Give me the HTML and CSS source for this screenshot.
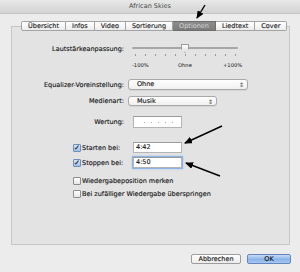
FILE: index.html
```html
<!DOCTYPE html>
<html lang="de">
<head>
    <meta charset="UTF-8">
    <title>African Skies</title>
    <link rel="stylesheet" href="styles.css">
</head>
<body>
    <div class="titlebar">African Skies</div>

    <div class="window">
        <div class="tabs">
            <span class="tab">Übersicht</span>
            <span class="tab">Infos</span>
            <span class="tab">Video</span>
            <span class="tab">Sortierung</span>
            <span class="tab active">Optionen</span>
            <span class="tab">Liedtext</span>
            <span class="tab">Cover</span>
        </div>

        <div class="panel">
            <div class="row row-slider">
                <div class="label">Lautstärkeanpassung:</div>
                <div class="slider">
                    <div class="track"><div class="thumb"></div></div>
                    <div class="ticks">
                        <span></span><span></span><span></span><span></span><span></span><span></span>
                        <span></span><span></span><span></span><span></span><span></span>
                    </div>
                    <div class="scale">
                        <span>-100%</span>
                        <span>Ohne</span>
                        <span>+100%</span>
                    </div>
                </div>
            </div>

            <div class="row row-eq">
                <div class="label">Equalizer-Voreinstellung:</div>
                <div class="popup popup-wide">Ohne<span class="updown">⇕</span></div>
            </div>

            <div class="row row-media">
                <div class="label">Medienart:</div>
                <div class="popup popup-short">Musik<span class="updown">⇕</span></div>
            </div>

            <div class="row row-rating">
                <div class="label">Wertung:</div>
                <div class="field rating">
                    <span class="dot"></span><span class="dot"></span><span class="dot"></span><span class="dot"></span><span class="dot"></span>
                </div>
            </div>

            <div class="row row-start">
                <div class="check-label"><span class="checkbox checked">✓</span>Starten bei:</div>
                <div class="field">4:42</div>
            </div>

            <div class="row row-stop">
                <div class="check-label"><span class="checkbox checked">✓</span>Stoppen bei:</div>
                <div class="field focused">4:50</div>
            </div>

            <div class="option option-first"><span class="checkbox"></span>Wiedergabeposition merken</div>
            <div class="option"><span class="checkbox"></span>Bei zufälliger Wiedergabe überspringen</div>
        </div>

        <div class="buttons">
            <button class="btn">Abbrechen</button>
            <button class="btn btn-default">OK</button>
        </div>
    </div>

    <!-- annotation arrows drawn over the dialog -->
    <svg class="arrows" width="300" height="272" viewBox="0 0 300 272">
        <defs>
            <marker id="head" markerUnits="userSpaceOnUse" markerWidth="8" markerHeight="7" refX="7" refY="3.5" orient="auto">
                <path d="M0,0 L8,3.5 L0,7 z" fill="#000"/>
            </marker>
        </defs>
        <line x1="205" y1="5" x2="197" y2="18" stroke="#000" stroke-width="1.4" marker-end="url(#head)"/>
        <line x1="222" y1="126" x2="185" y2="143" stroke="#000" stroke-width="1.4" marker-end="url(#head)"/>
        <line x1="220" y1="176" x2="186" y2="163" stroke="#000" stroke-width="1.4" marker-end="url(#head)"/>
    </svg>
</body>
</html>
```

FILE: styles.css
```css
* {
    margin: 0;
    padding: 0;
    box-sizing: border-box;
}

body {
    width: 300px;
    height: 272px;
    overflow: hidden;
    position: relative;
    background-color: #ececec;
    font-family: "DejaVu Sans", Verdana, sans-serif;
    font-size: 6.5px;
    color: #111;
    -webkit-text-stroke: 0.12px #111;
}

.titlebar {
    height: 14px;
    line-height: 13px;
    text-align: center;
    color: #4a4a4a;
    -webkit-text-stroke: 0;
    background: linear-gradient(#e8e8e8, #d3d3d3);
    border-bottom: 1px solid #c4c4c4;
}

.window {
    padding: 7px 10px 0 11px;
}

/* Tabs */
.tabs {
    display: flex;
    margin-left: 10px;
    height: 10px;
    margin-bottom: -5px;
    position: relative;
}

.tab {
    height: 10px;
    line-height: 9px;
    padding: 0 6px;
    background: linear-gradient(#ffffff, #ececec);
    border: 1px solid #a3a3a3;
    border-left: none;
    color: #1a1a1a;
}

.tab:first-child {
    border-left: 1px solid #a3a3a3;
    border-radius: 2px 0 0 2px;
}

.tab:last-child {
    border-radius: 0 2px 2px 0;
}

.tab.active {
    background: linear-gradient(#8d8d8d, #7b7b7b);
    border-color: #6e6e6e;
    color: #d6d6d6;
    -webkit-text-stroke: 0;
}

/* Panel */
.panel {
    width: 279px;
    height: 219px;
    background-color: #e3e3e3;
    border: 1px solid #c6c6c6;
    padding-top: 18px;
}

.row {
    display: flex;
    align-items: center;
}

.label {
    width: 112px;
    text-align: right;
    line-height: 8px;
}

/* Volume slider */
.row-slider {
    align-items: flex-start;
}

.slider {
    margin-left: 8px;
    width: 106px;
    height: 22px;
    position: relative;
}

.track {
    margin-top: 2px;
    height: 2px;
    background-color: #a7a7a7;
    border-radius: 1px;
    position: relative;
}

.thumb {
    position: absolute;
    left: 49px;
    top: -3px;
    width: 8px;
    height: 9px;
    background: linear-gradient(#ffffff, #dcdcdc);
    border: 1px solid #9c9c9c;
    clip-path: polygon(0 0, 100% 0, 100% 55%, 50% 100%, 0 55%);
}

.ticks {
    display: flex;
    gap: 8px;
    margin: 5px 0 0 3px;
}

.ticks span {
    width: 1px;
    height: 2px;
    background-color: #9a9a9a;
    flex: none;
}

.ticks span:nth-child(n+2) {
    margin-left: 1px;
}

.scale {
    position: relative;
    height: 8px;
    margin-top: 5px;
    font-size: 5.2px;
    line-height: 8px;
    -webkit-text-stroke: 0;
}

.scale span {
    position: absolute;
    top: 0;
}

.scale span:nth-child(1) { left: 0; }
.scale span:nth-child(2) { left: 46px; }
.scale span:nth-child(3) { left: 91px; }

/* Pop-up menus */
.popup {
    margin-left: 4px;
    height: 11px;
    line-height: 9px;
    padding-left: 8px;
    background: linear-gradient(#ffffff, #f0f0f0);
    border: 1px solid #a9a9a9;
    border-radius: 3px;
    position: relative;
    box-shadow: 0 1px 0 rgba(0, 0, 0, 0.06);
}

.popup-wide {
    width: 120px;
}

.popup-short {
    width: 89px;
    height: 10px;
}

.updown {
    position: absolute;
    right: 3px;
    top: 0;
    font-size: 6px;
    color: #444;
    -webkit-text-stroke: 0;
}

.row-eq {
    margin-top: 12px;
}

.row-media {
    margin-top: 6px;
}

/* Text fields */
.field {
    margin-left: 9px;
    width: 49px;
    height: 11px;
    line-height: 9px;
    padding-left: 2px;
    background-color: #fff;
    border: 1px solid #b4b4b4;
    border-top-color: #9a9a9a;
}

.rating {
    height: 12px;
    display: flex;
    align-items: center;
    gap: 6px;
    padding-left: 10px;
}

.dot {
    width: 1px;
    height: 1px;
    background-color: #b0b0b0;
}

.focused {
    box-shadow: 0 0 0 1px #8fb3e6, 0 0 2px 1px #a9c6ee;
}

.row-rating {
    margin-top: 10px;
}

.row-start {
    margin-top: 14px;
}

.row-stop {
    margin-top: 4px;
}

.check-label {
    width: 112px;
    padding-left: 61px;
    display: flex;
    align-items: center;
    line-height: 8px;
}

.checkbox {
    width: 8px;
    height: 8px;
    margin-right: 1px;
    flex: none;
    background: linear-gradient(#ffffff, #e6e6e6);
    border: 1px solid #8d8d8d;
    border-radius: 1px;
    font-size: 7px;
    line-height: 6px;
    text-align: center;
    color: #1a1a1a;
    font-weight: bold;
}

.checkbox.checked {
    background: linear-gradient(#d7e6f8, #9fc1ea);
    border-color: #6d8dbb;
}

.option {
    display: flex;
    align-items: center;
    padding-left: 61px;
    line-height: 8px;
    margin-top: 5px;
}

.option-first {
    margin-top: 9px;
}

/* Dialog buttons */
.buttons {
    display: flex;
    justify-content: flex-end;
    gap: 6px;
    margin-top: 9px;
    width: 280px;
}

.btn {
    height: 10px;
    font-family: inherit;
    font-size: 6.5px;
    line-height: 8px;
    color: #111;
    border: 1px solid #9d9d9d;
    border-radius: 2px;
    background: linear-gradient(#ffffff, #ebebeb);
    width: 50px;
}

.btn-default {
    width: 44px;
    background: linear-gradient(#c8dcf6, #8bb3ea 55%, #a9c8f2);
    border-color: #6485bd;
}

.arrows {
    position: absolute;
    left: 0;
    top: 0;
    pointer-events: none;
}
```
